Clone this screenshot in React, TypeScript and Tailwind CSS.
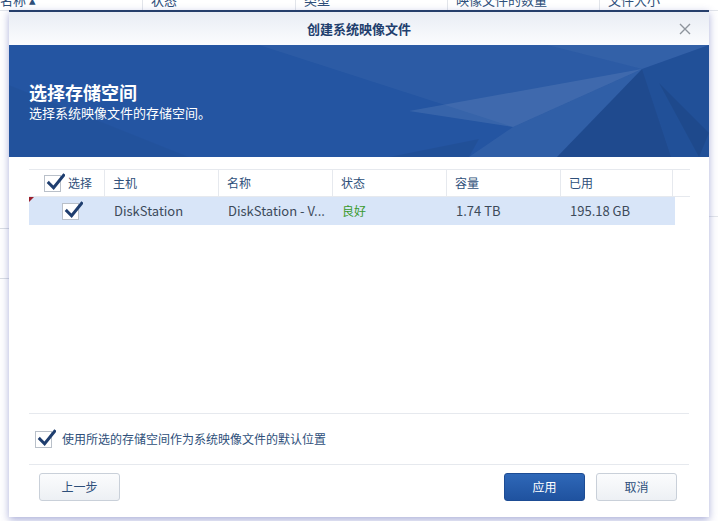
const cjk = '"Noto Sans CJK SC", "Noto Sans", sans-serif';

function Check({ className = '' }: { className?: string }) {
  return (
    <span className={`relative inline-block w-[17px] h-[17px] border border-[#b9c0c9] bg-white ${className}`}>
      <svg viewBox="0 0 20 20" className="absolute left-[1px] -top-[3px] w-[19px] h-[19px]">
        <path d="M3 10.5 L8 15.5 L18.5 2.5" fill="none" stroke="#1f3e6f" strokeWidth="3.2" strokeLinecap="square" />
      </svg>
    </span>
  );
}

function Banner() {
  return (
    <div className="relative h-[112px] bg-[#2455a2] overflow-hidden">
      <svg viewBox="0 0 700 112" className="absolute inset-0 w-full h-full" preserveAspectRatio="none">
        <polygon points="0,40 0,112 180,112" fill="#000" fillOpacity="0.03" />
        <polygon points="250,0 538,0 633,24 504,82" fill="#fff" fillOpacity="0.04" />
        <polygon points="538,0 633,24 700,0" fill="#fff" fillOpacity="0.07" />
        <polygon points="400,66 633,24 504,82" fill="#fff" fillOpacity="0.09" />
        <polygon points="504,82 633,24 548,112 460,112" fill="#fff" fillOpacity="0.06" />
        <polygon points="548,112 633,24 662,112" fill="#000" fillOpacity="0.12" />
        <polygon points="633,24 700,0 700,112 662,112" fill="#000" fillOpacity="0.06" />
        <polygon points="650,38 700,88 690,112" fill="#000" fillOpacity="0.08" />
        <polygon points="380,112 460,112 470,94" fill="#000" fillOpacity="0.06" />
      </svg>
      <div className="relative pl-[20px] pt-[36px] text-white" style={{ fontFamily: cjk }}>
        <div className="text-[18px] font-bold leading-[22px]">选择存储空间</div>
        <div className="text-[13px] leading-[19px]">选择系统映像文件的存储空间。</div>
      </div>
    </div>
  );
}

const cols = [
  { w: 'w-[114px]', label: '主机' },
  { w: 'w-[114px]', label: '名称' },
  { w: 'w-[114px]', label: '状态' },
  { w: 'w-[114px]', label: '容量' },
  { w: 'w-[112px]', label: '已用' },
];

function Grid() {
  return (
    <div className="w-[661px] text-[12px]" style={{ fontFamily: cjk }}>
      <div className="flex h-[28px] border-t border-b border-[#e6e9ee] text-[#2e4f7a]">
        <div className="w-[76px] flex items-center pl-[15px] gap-[7px] border-r border-[#e6e9ee]">
          <Check />
          <span>选择</span>
        </div>
        {cols.map((c) => (
          <div key={c.label} className={`${c.w} flex items-center pl-[8px] border-r border-[#e6e9ee]`}>
            {c.label}
          </div>
        ))}
      </div>
      <div className="relative flex h-[28px] w-[646px] bg-[#d8e5f8] text-[13px] text-[#3c4a5a]">
        <span className="absolute left-0 top-0 w-0 h-0 border-t-[5px] border-r-[5px] border-t-[#9a1f2c] border-r-transparent" />
        <div className="w-[76px] flex items-center pl-[33px]">
          <Check />
        </div>
        <div className="w-[114px] flex items-center pl-[9px]">DiskStation</div>
        <div className="w-[114px] flex items-center pl-[9px]">DiskStation - V...</div>
        <div className="w-[114px] flex items-center pl-[9px] text-[12px] text-[#3a9a2c]">良好</div>
        <div className="w-[114px] flex items-center pl-[9px]">1.74 TB</div>
        <div className="w-[112px] flex items-center pl-[9px]">195.18 GB</div>
      </div>
    </div>
  );
}

function Btn({ label, primary = false }: { label: string; primary?: boolean }) {
  return (
    <button
      className={`w-[81px] h-[28px] rounded-[3px] border text-[12px] ${
        primary
          ? 'border-[#1d4c94] bg-gradient-to-b from-[#2f68b8] to-[#1f529f] text-white'
          : 'border-[#c9d0d9] bg-gradient-to-b from-[#fbfcfd] to-[#edf0f4] text-[#2e4f7a]'
      }`}
      style={{ fontFamily: cjk }}
    >
      {label}
    </button>
  );
}

export default function App() {
  return (
    <div className="relative w-[718px] h-[521px] bg-white overflow-hidden">
      <div
        className="flex h-[22px] -mt-[11px] text-[13px] leading-[22px] text-[#2e4f7a] border-b border-[#e2e5ea]"
        style={{ fontFamily: cjk }}
      >
        <div className="w-[143px] border-r border-[#e2e5ea]">名称 ▴</div>
        <div className="w-[153px] pl-[8px] border-r border-[#e2e5ea]">状态</div>
        <div className="w-[152px] pl-[8px] border-r border-[#e2e5ea]">类型</div>
        <div className="w-[152px] pl-[8px] border-r border-[#e2e5ea]">映像文件的数量</div>
        <div className="flex-1 pl-[8px]">文件大小</div>
      </div>
      <div className="absolute left-0 top-[228px] w-[10px] h-px bg-[#d9dde3]" />
      <div className="absolute left-0 top-[278px] w-[10px] h-px bg-[#d9dde3]" />
      <div className="absolute right-0 top-[216px] w-[10px] h-px bg-[#e3e6ea]" />

      <div className="absolute left-[9px] top-[10px] w-[700px] h-[507px] bg-white flex flex-col border-t-2 border-[#263f6b] shadow-[0_3px_8px_rgba(70,80,170,0.45)]">
        <div className="relative h-[33px] flex items-center justify-center bg-gradient-to-b from-[#e9edf4] to-[#fbfcfe]">
          <span className="text-[13px] font-bold text-[#1f3f6e]" style={{ fontFamily: cjk }}>
            创建系统映像文件
          </span>
          <svg viewBox="0 0 12 12" className="absolute right-[18px] top-[11px] w-[12px] h-[12px]">
            <path d="M1 1 L11 11 M11 1 L1 11" stroke="#8e949c" strokeWidth="1.4" />
          </svg>
        </div>
        <Banner />
        <div className="flex-1 flex flex-col px-[20px] pt-[12px]">
          <div className="h-[244px]">
            <Grid />
          </div>
          <div className="border-t border-[#e6e9ee] h-[51px] flex items-center pl-[6px] gap-[10px]">
            <Check />
            <span className="text-[12px] text-[#2e4f7a]" style={{ fontFamily: cjk }}>
              使用所选的存储空间作为系统映像文件的默认位置
            </span>
          </div>
          <div className="border-t border-[#e6e9ee] flex items-start pt-[8px] pl-[10px] pr-[12px] gap-[11px]">
            <Btn label="上一步" />
            <div className="flex-1" />
            <Btn label="应用" primary />
            <Btn label="取消" />
          </div>
        </div>
      </div>
    </div>
  );
}
